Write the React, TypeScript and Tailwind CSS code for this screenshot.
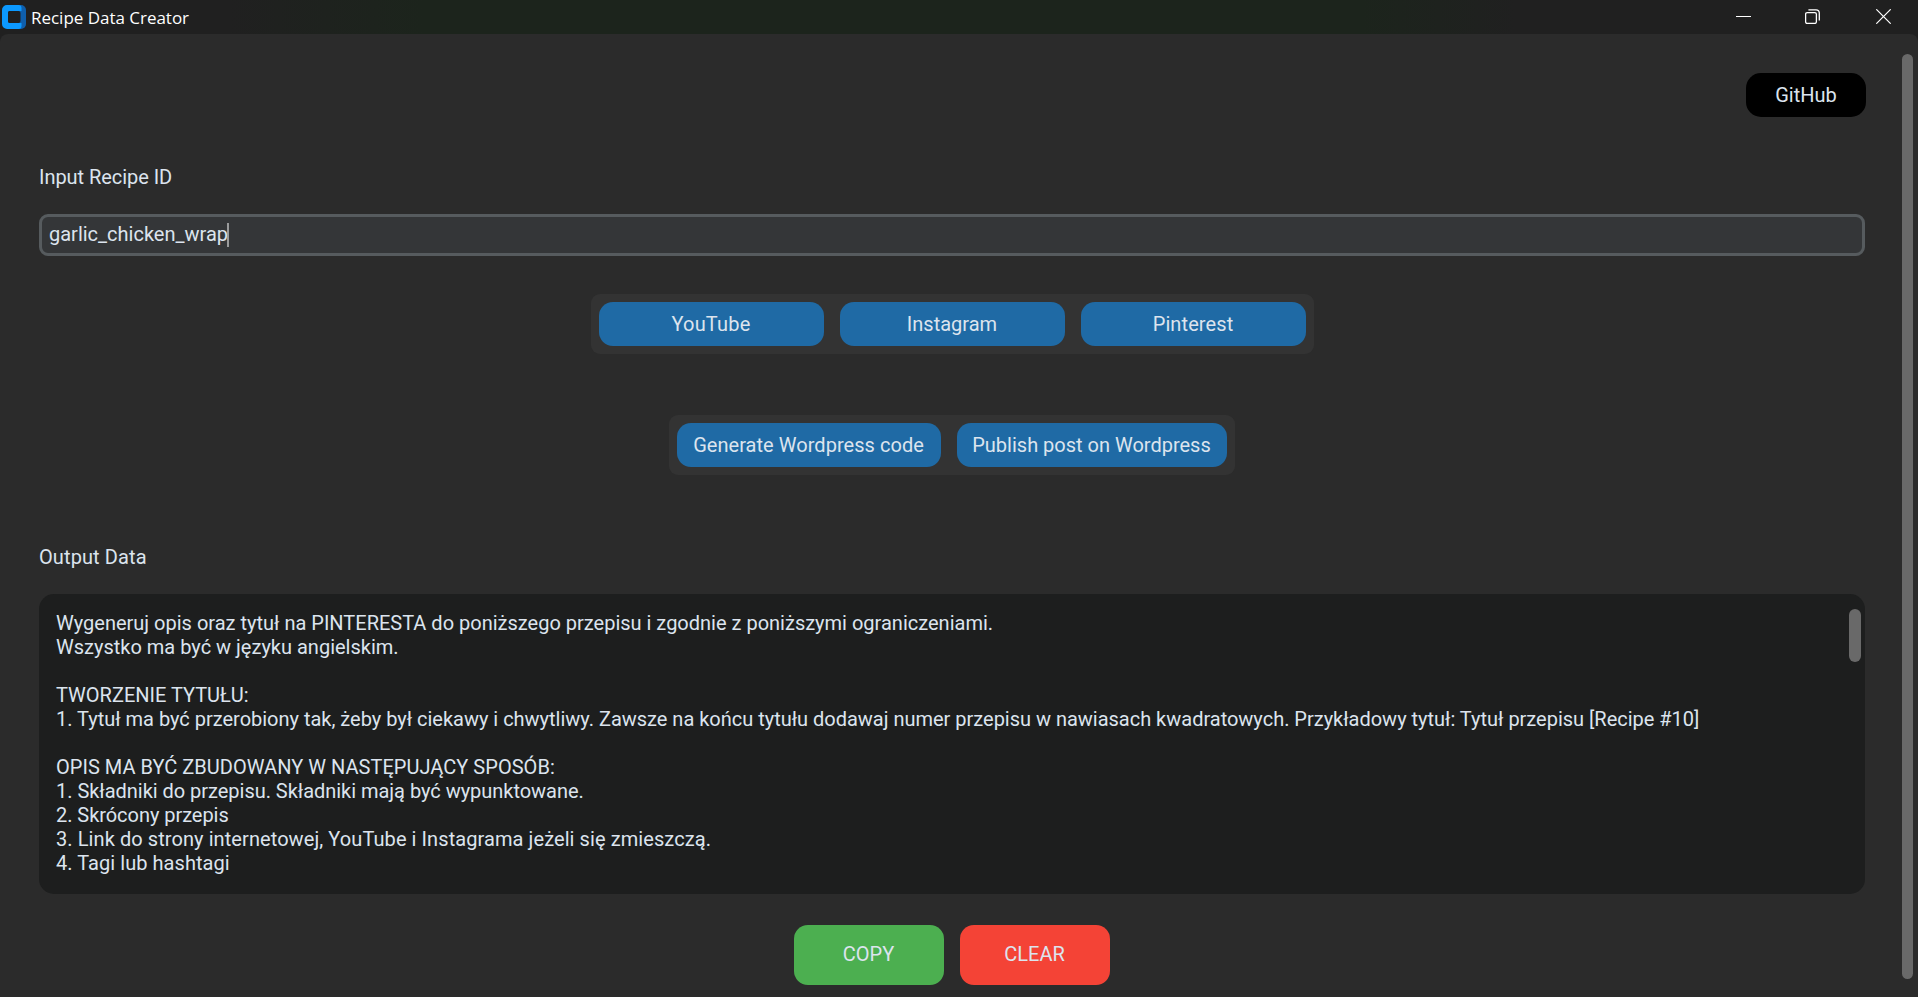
type Line = { text: string; tracking?: string };

const lines: Line[] = [
  { text: "Wygeneruj opis oraz tytuł na PINTERESTA do poniższego przepisu i zgodnie z poniższymi ograniczeniami." },
  { text: "Wszystko ma być w języku angielskim." },
  { text: "" },
  { text: "TWORZENIE TYTUŁU:" },
  {
    text: "1. Tytuł ma być przerobiony tak, żeby był ciekawy i chwytliwy. Zawsze na końcu tytułu dodawaj numer przepisu w nawiasach kwadratowych. Przykładowy tytuł: Tytuł przepisu [Recipe #10]",
    tracking: "tracking-[-0.014px]",
  },
  { text: "" },
  { text: "OPIS MA BYĆ ZBUDOWANY W NASTĘPUJĄCY SPOSÓB:", tracking: "tracking-[0.03px]" },
  { text: "1. Składniki do przepisu. Składniki mają być wypunktowane.", tracking: "tracking-[-0.03px]" },
  { text: "2. Skrócony przepis", tracking: "tracking-[-0.05px]" },
  {
    text: "3. Link do strony internetowej, YouTube i Instagrama jeżeli się zmieszczą.",
    tracking: "tracking-[0.08px]",
  },
  { text: "4. Tagi lub hashtagi", tracking: "tracking-[0.05px]" },
];

function TitleBar() {
  return (
    <header className="flex h-[34px] shrink-0 items-center bg-[linear-gradient(90deg,#202020_0%,#202020_12%,#1c241c_22%,#1c241c_71%,#202020_79%,#202020_100%)] pl-0.5 text-white">
      <svg width="24" height="24" viewBox="0 0 24 24" className="shrink-0">
        <path d="M12 0h7a5 5 0 0 1 5 5v14a5 5 0 0 1-5 5h-7z" fill="#0f5fac" />
        <path
          fillRule="evenodd"
          d="M5 0h11.5a3 3 0 0 1 3 3v3H8a2 2 0 0 0-2 2v8a2 2 0 0 0 2 2h11.5v3a3 3 0 0 1-3 3H5a5 5 0 0 1-5-5V5a5 5 0 0 1 5-5z"
          fill="#0c99ff"
        />
        <rect x="6" y="6" width="12.5" height="12" rx="2" fill="#202020" />
      </svg>
      <h1 className="ml-[5px] grow pt-px font-['Open_Sans',sans-serif] text-[17px] leading-[33px] tracking-[-0.02px]">
        Recipe Data Creator
      </h1>
      <div className="flex h-full items-center pb-px">
        <button className="flex h-full w-[69px] items-center justify-center" aria-label="Minimize">
          <svg width="15" height="15" viewBox="0 0 15 15" fill="none" stroke="#fff">
            <path d="M0 7.5h15" />
          </svg>
        </button>
        <button className="mr-0.5 flex h-full w-[69px] items-center justify-center" aria-label="Restore">
          <svg width="15" height="15" viewBox="0 0 15 15" fill="none" stroke="#fff" strokeWidth="1.3">
            <rect x="0.6" y="3.6" width="10.8" height="10.8" rx="1.6" />
            <path d="M3.4 0.8H11Q14.3 0.8 14.3 4V11.4" />
          </svg>
        </button>
        <button className="flex h-full w-[69px] items-center justify-center" aria-label="Close">
          <svg width="15" height="15" viewBox="0 0 15 15" fill="none" stroke="#fff" strokeWidth="1.2">
            <path d="M0.3 0.3l14.4 14.4M14.7 0.3L0.3 14.7" />
          </svg>
        </button>
      </div>
    </header>
  );
}

function BlueButton({ label, className }: { label: string; className: string }) {
  return <button className={`h-11 rounded-[14px] bg-[#1f6aa5] ${className}`}>{label}</button>;
}

export default function App() {
  return (
    <div className="flex h-[997px] w-[1918px] flex-col overflow-hidden bg-[#202020] font-[Roboto,sans-serif] text-[20px] leading-6 text-[#dce4ee]">
      <TitleBar />
      <div className="flex min-h-0 grow rounded-t-lg bg-[#2b2b2b] pr-[5px]">
        <main className="flex grow flex-col pr-9 pl-[39px]">
          <button className="mt-[39px] h-11 w-[120px] shrink-0 self-end rounded-[15px] bg-black">GitHub</button>
          <label className="mt-12 tracking-[-0.05px]">Input Recipe ID</label>
          <div className="mt-[25px] mr-px flex h-[42px] shrink-0 items-center rounded-[9px] border-[3px] border-[#565b5e] bg-[#343638] pl-[7px]">
            <span className="-mt-0.5">garlic_chicken_wrap</span>
            <span className="-ml-px h-6 w-0.5 bg-[#9a9b9c]" />
          </div>
          <div className="mt-[38px] mr-px flex h-[60px] shrink-0 gap-4 self-center rounded-[9px] bg-[#333333] p-2">
            <BlueButton label="YouTube" className="w-[225px] tracking-[0.2px]" />
            <BlueButton label="Instagram" className="w-[225px]" />
            <BlueButton label="Pinterest" className="w-[225px] tracking-[0.1px]" />
          </div>
          <div className="mt-[61px] mr-0.5 flex h-[60px] shrink-0 gap-4 self-center rounded-[9px] bg-[#333333] p-2">
            <BlueButton label="Generate Wordpress code" className="w-[264px] tracking-[0.04px]" />
            <BlueButton label="Publish post on Wordpress" className="w-[270px]" />
          </div>
          <label className="mt-[70px] tracking-[0.1px]">Output Data</label>
          <div className="mt-[25px] mr-px flex h-[300px] shrink-0 justify-between rounded-[15px] bg-[#1d1e1e] pt-[15px] pr-1 pl-[17px]">
            <div className="pt-0.5 whitespace-pre">
              {lines.map((line, i) => (
                <p key={i} className={`h-6 ${line.tracking ?? ""}`}>
                  {line.text}
                </p>
              ))}
            </div>
            <div className="h-[53px] w-3 rounded-full bg-[#696969]" />
          </div>
          <div className="mt-[31px] mr-0.5 flex shrink-0 gap-4 self-center">
            <button className="h-[60px] w-[150px] rounded-[14px] bg-[#4caf50] pb-0.5">COPY</button>
            <button className="h-[60px] w-[150px] rounded-[14px] bg-[#f44336] pb-0.5">CLEAR</button>
          </div>
        </main>
        <div className="mt-5 h-[925px] w-[11px] shrink-0 rounded-full bg-[#696969]" />
      </div>
    </div>
  );
}
